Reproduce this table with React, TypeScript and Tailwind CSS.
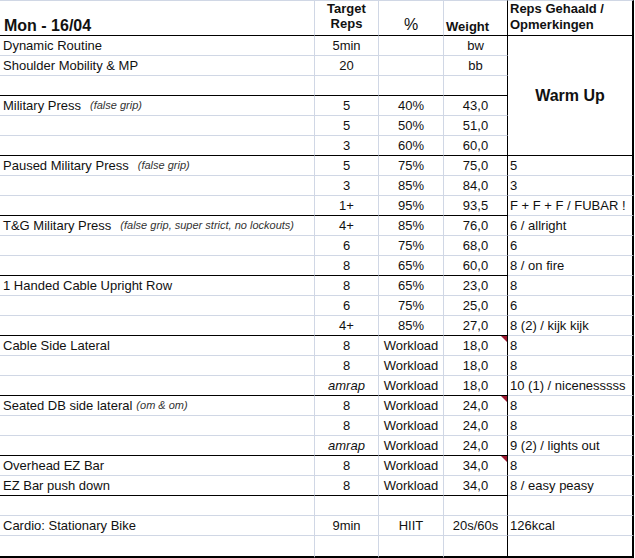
import React from "react";

type Row = {
  name?: string;
  note?: string;
  wide?: boolean;
  reps?: string;
  amrap?: boolean;
  pct?: string;
  weight?: string;
  notes?: string;
  line?: boolean;
  comment?: boolean;
};

const rows: Row[] = [
  { name: "Dynamic Routine", reps: "5min", weight: "bw" },
  { name: "Shoulder Mobility & MP", reps: "20", weight: "bb" },
  { line: true },
  { name: "Military Press", note: "(false grip)", wide: true, reps: "5", pct: "40%", weight: "43,0" },
  { reps: "5", pct: "50%", weight: "51,0" },
  { reps: "3", pct: "60%", weight: "60,0", line: true },
  { name: "Paused Military Press", note: "(false grip)", wide: true, reps: "5", pct: "75%", weight: "75,0", notes: "5" },
  { reps: "3", pct: "85%", weight: "84,0", notes: "3" },
  { reps: "1+", pct: "95%", weight: "93,5", notes: "F + F + F / FUBAR !", line: true },
  { name: "T&G Military Press", note: "(false grip, super strict, no lockouts)", wide: true, reps: "4+", pct: "85%", weight: "76,0", notes: "6 / allright" },
  { reps: "6", pct: "75%", weight: "68,0", notes: "6" },
  { reps: "8", pct: "65%", weight: "60,0", notes: "8 / on fire", line: true },
  { name: "1 Handed Cable Upright Row", reps: "8", pct: "65%", weight: "23,0", notes: "8" },
  { reps: "6", pct: "75%", weight: "25,0", notes: "6" },
  { reps: "4+", pct: "85%", weight: "27,0", notes: "8 (2) / kijk kijk", line: true },
  { name: "Cable Side Lateral", reps: "8", pct: "Workload", weight: "18,0", notes: "8", comment: true },
  { reps: "8", pct: "Workload", weight: "18,0", notes: "8" },
  { reps: "amrap", amrap: true, pct: "Workload", weight: "18,0", notes: "10 (1) / nicenesssss", line: true },
  { name: "Seated DB side lateral", note: "(om & om)", reps: "8", pct: "Workload", weight: "24,0", notes: "8", comment: true },
  { reps: "8", pct: "Workload", weight: "24,0", notes: "8" },
  { reps: "amrap", amrap: true, pct: "Workload", weight: "24,0", notes: "9 (2) / lights out", line: true },
  { name: "Overhead EZ Bar", reps: "8", pct: "Workload", weight: "34,0", notes: "8", comment: true },
  { name: "EZ Bar push down", reps: "8", pct: "Workload", weight: "34,0", notes: "8 / easy peasy", line: true },
  {},
  { name: "Cardio: Stationary Bike", reps: "9min", pct: "HIIT", weight: "20s/60s", notes: "126kcal" },
  {},
];

export default function App() {
  const last = rows.length - 1;

  return (
    <div className="w-[635px] h-[558px] bg-white text-[#111] font-['Liberation_Sans',Arial,sans-serif] overflow-hidden">
      <div className="grid grid-cols-[315px_64px_65px_64px_126px]">
        {/* header */}
        <div className="h-[36px] border-t border-b border-r border-t-[#d0d7e5] border-b-black border-r-[#d0d7e5] flex items-end pl-[4px] text-[16px] leading-[18px] font-bold">
          Mon - 16/04
        </div>
        <div className="h-[36px] border-t border-b border-r border-t-[#d0d7e5] border-b-black border-r-[#d0d7e5] flex flex-col items-center text-[13px] leading-[15px] font-bold">
          <span>Target</span>
          <span>Reps</span>
        </div>
        <div className="h-[36px] border-t border-b border-r border-t-[#d0d7e5] border-b-black border-r-[#d0d7e5] flex items-end justify-center pb-[1px] text-[16px] leading-[18px]">
          %
        </div>
        <div className="h-[36px] border-t border-b border-r border-t-[#d0d7e5] border-b-black border-r-black flex items-end pl-[2px] pb-[1px] text-[13px] leading-[15px] font-bold">
          Weight
        </div>
        <div className="h-[36px] border-t border-b border-r-2 border-t-[#d0d7e5] border-b-black border-r-black flex flex-col pl-[2px] text-[13px] leading-[16px] font-bold">
          <span>Reps Gehaald /</span>
          <span>Opmerkingen</span>
        </div>

        {rows.map((r, i) => {
          const isLast = i === last;
          const h = isLast ? "h-[22px] border-b-2 border-b-black" : "h-5 border-b";
          const bottom = isLast ? "" : r.line ? "border-b-black" : "border-b-[#d0d7e5]";
          const cell = `${h} ${bottom} border-r flex items-end pb-[2px] text-[13px] leading-[15px] whitespace-nowrap`;

          return (
            <React.Fragment key={i}>
              <div className={`${cell} border-r-[#d0d7e5] pl-[3px]`}>
                {r.name}
                {r.note && (
                  <span className={`${r.wide ? "ml-[9px]" : "ml-[4px]"} text-[11px] italic text-[#333]`}>{r.note}</span>
                )}
              </div>
              <div className={`${cell} border-r-[#d0d7e5] justify-center ${r.amrap ? "italic" : ""}`}>{r.reps}</div>
              <div className={`${cell} border-r-[#d0d7e5] justify-center`}>{r.pct}</div>
              <div className={`${cell} border-r-black justify-center relative`}>
                {r.weight}
                {r.comment && (
                  <span className="absolute top-0 right-0 w-0 h-0 border-l-[6px] border-l-transparent border-t-[6px] border-t-[#9a1a30]" />
                )}
              </div>
              {i === 0 && (
                <div className="row-span-6 border-b border-b-black border-r-2 border-r-black flex items-center justify-center text-[16px] font-bold pt-[1px]">
                  Warm Up
                </div>
              )}
              {i > 5 && (
                <div className={`${h} ${isLast ? "" : "border-b-[#d0d7e5]"} border-r-2 border-r-black flex items-end pb-[2px] pl-[2px] text-[13px] leading-[15px] whitespace-nowrap`}>
                  {r.notes}
                </div>
              )}
            </React.Fragment>
          );
        })}
      </div>
    </div>
  );
}
